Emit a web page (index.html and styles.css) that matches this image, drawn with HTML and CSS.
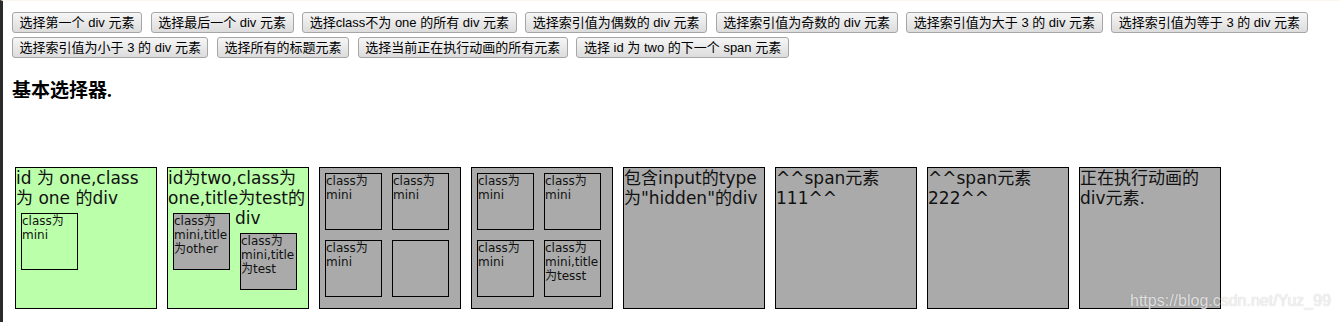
FILE: index.html
```html
<!DOCTYPE html>
<html lang="zh">
<head>
    <meta charset="UTF-8">
    <title>基本选择器</title>
    <link rel="stylesheet" href="styles.css">
</head>
<body>

    <!-- Buttons -->
    <div class="toolbar">
        <button>选择第一个 div 元素</button>
        <button>选择最后一个 div 元素</button>
        <button>选择class不为 one 的所有 div 元素</button>
        <button>选择索引值为偶数的 div 元素</button>
        <button>选择索引值为奇数的 div 元素</button>
        <button>选择索引值为大于 3 的 div 元素</button>
        <button>选择索引值为等于 3 的 div 元素</button>
        <button>选择索引值为小于 3 的 div 元素</button>
        <button>选择所有的标题元素</button>
        <button>选择当前正在执行动画的所有元素</button>
        <button>选择 id 为 two 的下一个 span 元素</button>
    </div>

    <h3 class="title">基本选择器.</h3>

    <!-- Demo boxes -->
    <div class="boxes">
        <div class="box one" id="one">
            id 为 one,class 为 one 的div
            <div class="mini clear">class为mini</div>
        </div>
        <div class="box one" id="two" title="test">
            id为two,class为one,title为test的div
            <div class="mini" title="other">class为mini,title为other</div>
            <div class="mini" title="test">class为mini,title为test</div>
        </div>
        <div class="box">
            <div class="mini">class为mini</div>
            <div class="mini">class为mini</div>
            <div class="mini">class为mini</div>
            <div class="mini"></div>
        </div>
        <div class="box">
            <div class="mini">class为mini</div>
            <div class="mini">class为mini</div>
            <div class="mini">class为mini</div>
            <div class="mini" title="tesst">class为mini,title为tesst</div>
        </div>
        <div class="box hide">包含input的type为"hidden"的div<input type="hidden" size="8"></div>
        <span class="box" id="sp1">^^span元素 111^^</span>
        <span class="box" id="sp2">^^span元素 222^^</span>
        <div class="box" id="mover">正在执行动画的div元素.</div>
    </div>

    <!-- Watermark -->
    <div class="watermark">https://blog.csdn.net/Yuz_99</div>

</body>
</html>
```

FILE: styles.css
```css
/* Page */
html {
    background: #fff;
}

body {
    margin: 0;
    padding: 12px 0 0 7px;
    min-height: 322px;
    box-sizing: border-box;
    border-left: 3px solid #2b2b2b;
    border-top: 1px solid #fbf7ee;
    color: #000;
    position: relative;
}

/* Buttons */
.toolbar {
    display: flex;
    flex-wrap: wrap;
    gap: 4px 8.5px;
    margin: -1px 2px 0 2px;
}

.toolbar button {
    font-family: 'Liberation Sans', 'Noto Sans CJK SC', sans-serif;
    font-size: 13px;
    line-height: 15px;
    height: 21px;
    padding: 2px 6.6px;
    margin: 0;
    color: #000;
    background: linear-gradient(#f6f6f6, #dcdcdc);
    border: 1px solid #a6a6a6;
    border-radius: 3px;
    white-space: nowrap;
}

/* Heading */
.title {
    margin: 22px 0 0 2px;
    height: 22px;
    font-family: 'Liberation Serif', 'Noto Sans CJK SC', serif;
    font-size: 19px;
    line-height: 22px;
    font-weight: bold;
}

/* Boxes */
.boxes {
    display: flex;
    margin-top: 60px;
}

.box {
    display: block;
    width: 140px;
    height: 140px;
    margin: 5px;
    flex: none;
    background: #aaa;
    border: 1px solid #000;
    font-family: 'DejaVu Sans', Verdana, 'Noto Sans CJK SC', sans-serif;
    font-size: 17px;
    line-height: 20px;
    color: #111;
}

.box.one {
    background: #bbffaa;
}

.mini {
    float: left;
    width: 55px;
    height: 55px;
    margin: 5px;
    background: #aaa;
    border: 1px solid #000;
    font-size: 12px;
    line-height: 14px;
}

.mini.clear {
    background: transparent;
}

/* Watermark */
.watermark {
    position: absolute;
    left: 1127px;
    top: 291px;
    font-family: 'Liberation Sans', sans-serif;
    font-size: 16px;
    color: rgba(255, 255, 255, 0.75);
    text-shadow: 0 0 1px rgba(0, 0, 0, 0.25);
    white-space: nowrap;
}
```
